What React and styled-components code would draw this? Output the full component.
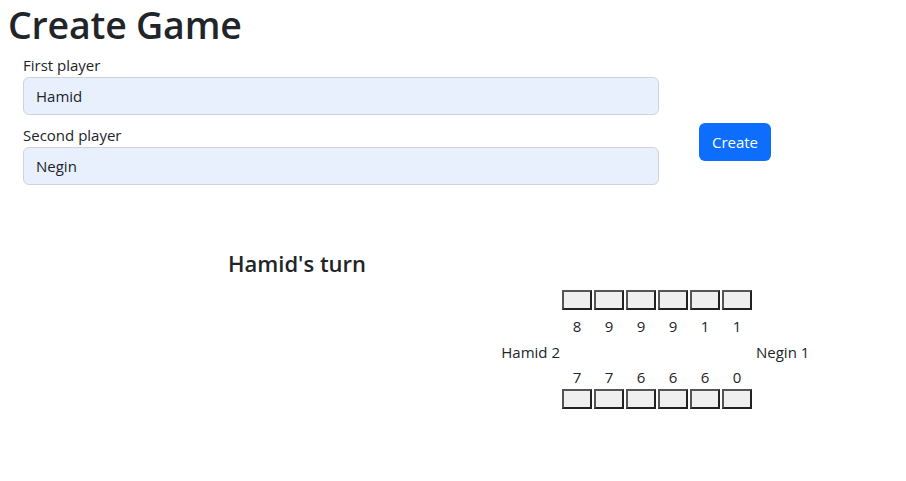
import React from 'react';
import styled, { createGlobalStyle } from 'styled-components';

const GlobalStyle = createGlobalStyle`
  body {
    margin: 0;
    background: #fff;
    color: #212529;
    font-family: "Open Sans", "Noto Sans", sans-serif;
    font-size: 15px;
    line-height: 1.5;
  }
`;

const Title = styled.h1`
  margin: 0;
  padding: 2px 0 0 8px;
  font-size: 37.5px;
  font-weight: 600;
  line-height: 45px;
  letter-spacing: -0.2px;
`;

const FormRow = styled.div`
  display: flex;
  align-items: flex-start;
  padding: 6px 0 0 23px;
`;

const Fields = styled.div`
  width: 636px;
`;

const Field = styled.div`
  margin-bottom: 8px;
`;

const Label = styled.label`
  display: block;
  font-size: 15px;
  line-height: 24px;
`;

const Input = styled.input`
  display: block;
  box-sizing: border-box;
  width: 100%;
  height: 38px;
  padding: 6px 12px;
  border: 1px solid #ced4da;
  border-radius: 6px;
  background: #e8f0fe;
  color: #212529;
  font-family: inherit;
  font-size: 15px;
  outline: none;
`;

const CreateButton = styled.button`
  margin: 70px 0 0 40px;
  width: 72px;
  height: 38px;
  border: none;
  border-radius: 6px;
  background: #0d6efd;
  color: #fff;
  font-family: inherit;
  font-size: 15px;
  cursor: pointer;
`;

const Turn = styled.h4`
  margin: 55px 0 0 228px;
  font-size: 22px;
  font-weight: 600;
  line-height: 30px;
`;

const Board = styled.div`
  display: grid;
  grid-template-columns: 62px repeat(6, 32px) 58px;
  grid-template-rows: 20px 25px 25px 25px 20px;
  row-gap: 1px;
  margin: 12px 0 0 500px;
  font-size: 15px;
  line-height: 25px;
`;

const Pit = styled.button`
  box-sizing: border-box;
  width: 30px;
  height: 20px;
  padding: 0;
  background: #efefef;
  border: 2px solid;
  border-color: #555 #222 #222 #555;
  grid-row: ${p => p.$row};
  cursor: pointer;
`;

const Count = styled.span`
  grid-row: ${p => p.$row};
  width: 30px;
  text-align: center;
  margin-top: ${p => (p.$row === 2 ? '3px' : '2px')};
`;

const Store = styled.span`
  grid-row: 3;
  grid-column: ${p => (p.$side === 'left' ? 1 : 8)};
  justify-self: ${p => (p.$side === 'left' ? 'end' : 'start')};
  padding: ${p => (p.$side === 'left' ? '0 2px 0 0' : '0 0 0 2px')};
  margin-top: 3px;
  white-space: nowrap;
`;

const topCounts = [8, 9, 9, 9, 1, 1];
const bottomCounts = [7, 7, 6, 6, 6, 0];

export default function App() {
  return (
    <>
      <GlobalStyle />
      <Title>Create Game</Title>
      <FormRow>
        <Fields>
          <Field>
            <Label>First player</Label>
            <Input defaultValue="Hamid" />
          </Field>
          <Field>
            <Label>Second player</Label>
            <Input defaultValue="Negin" />
          </Field>
        </Fields>
        <CreateButton>Create</CreateButton>
      </FormRow>
      <Turn>Hamid's turn</Turn>
      <Board>
        {topCounts.map((c, i) => (
          <Pit key={'tp' + i} $row={1} style={{ gridColumn: i + 2 }} />
        ))}
        {topCounts.map((c, i) => (
          <Count key={'tc' + i} $row={2} style={{ gridColumn: i + 2 }}>{c}</Count>
        ))}
        <Store $side="left">Hamid 2</Store>
        <Store $side="right">Negin 1</Store>
        {bottomCounts.map((c, i) => (
          <Count key={'bc' + i} $row={4} style={{ gridColumn: i + 2 }}>{c}</Count>
        ))}
        {bottomCounts.map((c, i) => (
          <Pit key={'bp' + i} $row={5} style={{ gridColumn: i + 2 }} />
        ))}
      </Board>
    </>
  );
}
